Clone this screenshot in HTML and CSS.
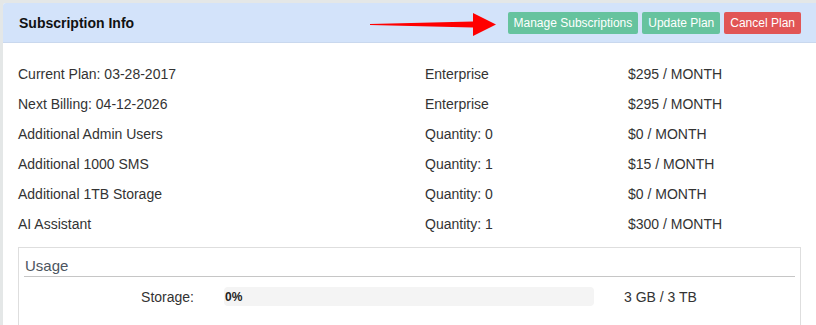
FILE: index.html
```html
<!DOCTYPE html>
<html>
<head>
<meta charset="utf-8">
<link rel="stylesheet" href="styles.css">
</head>
<body>
<div class="panel">
  <div class="panel-head">
    <div class="title">Subscription Info</div>
    <div class="actions">
      <button class="btn btn-green">Manage Subscriptions</button>
      <button class="btn btn-green">Update Plan</button>
      <button class="btn btn-red">Cancel Plan</button>
    </div>
    <svg class="arrow" width="130" height="26" viewBox="0 0 130 26">
      <polygon points="0,11 103,8.5 103,0 126,11.5 103,23 103,14.5 0,12" fill="#ff0000"/>
    </svg>
  </div>
  <div class="panel-body">
    <div class="rows">
      <div>Current Plan: 03-28-2017</div><div>Enterprise</div><div>$295 / MONTH</div>
      <div>Next Billing: 04-12-2026</div><div>Enterprise</div><div>$295 / MONTH</div>
      <div>Additional Admin Users</div><div>Quantity: 0</div><div>$0 / MONTH</div>
      <div>Additional 1000 SMS</div><div>Quantity: 1</div><div>$15 / MONTH</div>
      <div>Additional 1TB Storage</div><div>Quantity: 0</div><div>$0 / MONTH</div>
      <div>AI Assistant</div><div>Quantity: 1</div><div>$300 / MONTH</div>
    </div>
    <div class="usage">
      <div class="legend">Usage</div>
      <div class="usage-row">
        <div class="label">Storage:</div>
        <div class="bar"><span class="bar-text">0%</span></div>
        <div class="amount">3 GB / 3 TB</div>
      </div>
    </div>
  </div>
</div>
</body>
</html>
```

FILE: styles.css
```css
html, body {
  margin: 0;
  padding: 0;
}
body {
  background: #e4e7e7;
  padding: 3px 0 0 3px;
  font-family: "Liberation Sans", Arial, sans-serif;
  color: #333;
  height: 322px;
  overflow: hidden;
}
.panel {
  background: #fff;
  border-top-left-radius: 3px;
  overflow: hidden;
  height: 330px;
}
.panel-head {
  position: relative;
  background: #d3e3fa;
  height: 40px;
  display: flex;
  align-items: center;
  justify-content: space-between;
  padding: 0 15px 0 16px;
  border-bottom: 1px solid #c9d8ee;
  box-sizing: border-box;
}
.title {
  font-weight: bold;
  font-size: 14px;
  color: #111;
  padding-top: 1px;
}
.actions {
  display: flex;
  gap: 4px;
}
.btn {
  font-family: "Liberation Sans", Arial, sans-serif;
  font-size: 12px;
  color: #fff;
  border: none;
  border-radius: 2px;
  height: 22px;
  padding: 0 6px;
  line-height: 22px;
}
.btn-green { background: #66c39e; }
.btn-red { background: #e15555; }
.arrow {
  position: absolute;
  left: 367px;
  top: 10px;
}
.panel-body {
  padding: 16px 15px 0 15px;
}
.rows {
  display: grid;
  grid-template-columns: 407px 203px 1fr;
  grid-auto-rows: 30px;
  line-height: 30px;
  font-size: 14px;
  color: #333;
}
.usage {
  margin-top: 8px;
  border: 1px solid #dedede;
  padding: 8px 5px 20px 5px;
}
.legend {
  font-size: 15px;
  color: #4d5560;
  line-height: 20px;
  padding-left: 1px;
  border-bottom: 1px solid #c6c6c6;
}
.usage-row {
  display: flex;
  align-items: center;
  margin-top: 10px;
  font-size: 14px;
}
.label {
  width: 170px;
  text-align: right;
}
.bar {
  width: 370px;
  height: 19px;
  margin-left: 30px;
  background: #f4f4f4;
  border-radius: 4px;
  display: flex;
  align-items: center;
}
.bar-text {
  font-size: 12px;
  font-weight: bold;
  color: #222;
  padding-left: 1px;
}
.amount {
  margin-left: 30px;
}
```
